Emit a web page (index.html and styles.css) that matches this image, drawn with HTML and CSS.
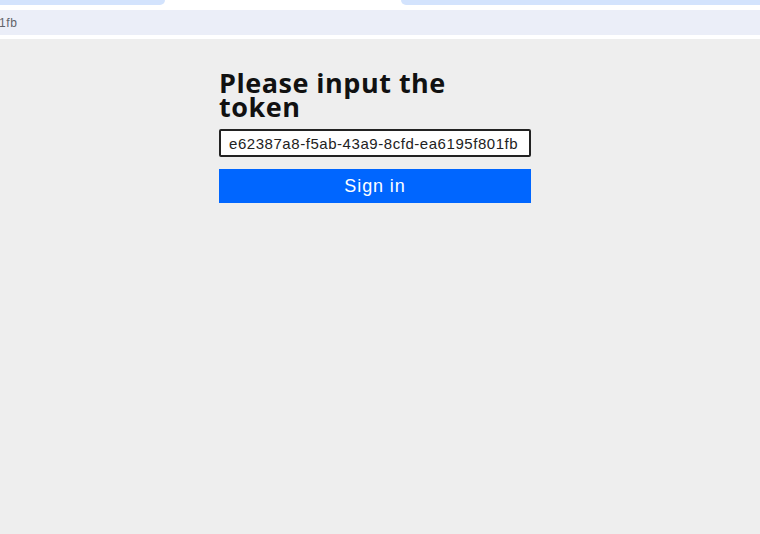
FILE: index.html
```html
<!DOCTYPE html>
<html>
<head>
<meta charset="utf-8">
<title>Token</title>
<link rel="stylesheet" href="styles.css">
</head>
<body>
<div class="chrome">
  <div class="tabs">
    <div class="tab tab-left"></div>
    <div class="tab-gap"></div>
    <div class="tab tab-right"></div>
  </div>
  <div class="addr"><span class="addr-text">1fb</span></div>
</div>
<main class="page">
  <form class="login">
    <h1 class="title">Please input the token</h1>
    <input class="token" type="text" value="e62387a8-f5ab-43a9-8cfd-ea6195f801fb">
    <button class="signin" type="button">Sign in</button>
  </form>
</main>
</body>
</html>
```
FILE: styles.css
```css
html, body {
  margin: 0;
  padding: 0;
  height: 100%;
}
body {
  background: #eeeeee;
  font-family: "Liberation Sans", Arial, sans-serif;
}
.chrome {
  background: #ffffff;
  height: 39px;
}
.tabs {
  display: flex;
  height: 5px;
}
.tab {
  background: #d3e3fd;
  height: 5px;
}
.tab-left {
  width: 165px;
  border-bottom-right-radius: 6px;
}
.tab-gap {
  flex: 0 0 236px;
}
.tab-right {
  flex: 1;
  border-bottom-left-radius: 6px;
}
.addr {
  margin-top: 5px;
  height: 25px;
  background: #ebeef8;
  display: flex;
  align-items: center;
}
.addr-text {
  font-size: 12px;
  letter-spacing: 0.6px;
  color: #5f6368;
  margin-left: -1px;
}
.page {
  display: flex;
  justify-content: center;
  padding-top: 32px;
}
.login {
  width: 312px;
  display: flex;
  flex-direction: column;
  margin-left: -10px;
}
.title {
  font-family: "Open Sans", "Noto Sans", sans-serif;
  font-weight: 700;
  font-size: 27px;
  letter-spacing: 0.5px;
  line-height: 24px;
  margin: 0 0 10px 0;
  width: 280px;
  color: #111;
}
.token {
  box-sizing: border-box;
  height: 28px;
  border: 2px solid #222;
  border-radius: 2px;
  padding: 0 8px;
  font-family: "Liberation Sans", Arial, sans-serif;
  font-size: 15px;
  letter-spacing: 0.55px;
  color: #222;
  background: #fff;
}
.signin {
  margin-top: 12px;
  height: 34px;
  border: none;
  background: #0066ff;
  color: #fff;
  font-family: "Liberation Sans", Arial, sans-serif;
  font-size: 18px;
  letter-spacing: 0.9px;
}
```
